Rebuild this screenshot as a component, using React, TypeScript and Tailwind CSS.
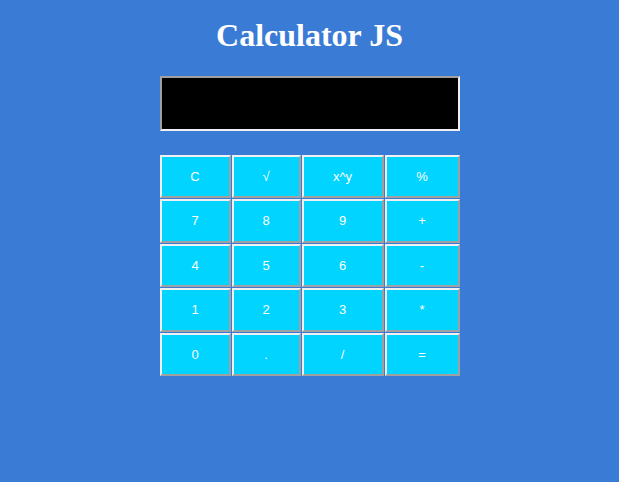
const keys = [
  ['C', '√', 'x^y', '%'],
  ['7', '8', '9', '+'],
  ['4', '5', '6', '-'],
  ['1', '2', '3', '*'],
  ['0', '.', '/', '='],
];

export default function App() {
  return (
    <div className="min-h-screen w-full bg-[#3a7bd5] pt-[17px]">
      {/* Title */}
      <h1 className="text-center font-['Liberation_Serif',serif] text-[32px] font-bold leading-[36px] text-white">
        Calculator JS
      </h1>

      <div className="mx-auto mt-[23px] w-[300px]">
        {/* Display */}
        <div className="h-[55px] w-full border-2 border-t-[#a0a0a0] border-l-[#a0a0a0] border-r-[#f0f0f0] border-b-[#f0f0f0] bg-black" />

        {/* Keys */}
        <div className="mt-[24px] grid h-[221px] grid-cols-[71px_69px_82px_75px] grid-rows-5 gap-[1px]">
          {keys.flat().map((k) => (
            <button
              key={k}
              className="flex items-center justify-center border-2 border-t-[#f0f0f0] border-l-[#f0f0f0] border-r-[#a0a0a0] border-b-[#a0a0a0] bg-[#00d4ff] font-['Liberation_Sans',Arial,sans-serif] text-[13px] text-white"
            >
              {k}
            </button>
          ))}
        </div>
      </div>
    </div>
  );
}
